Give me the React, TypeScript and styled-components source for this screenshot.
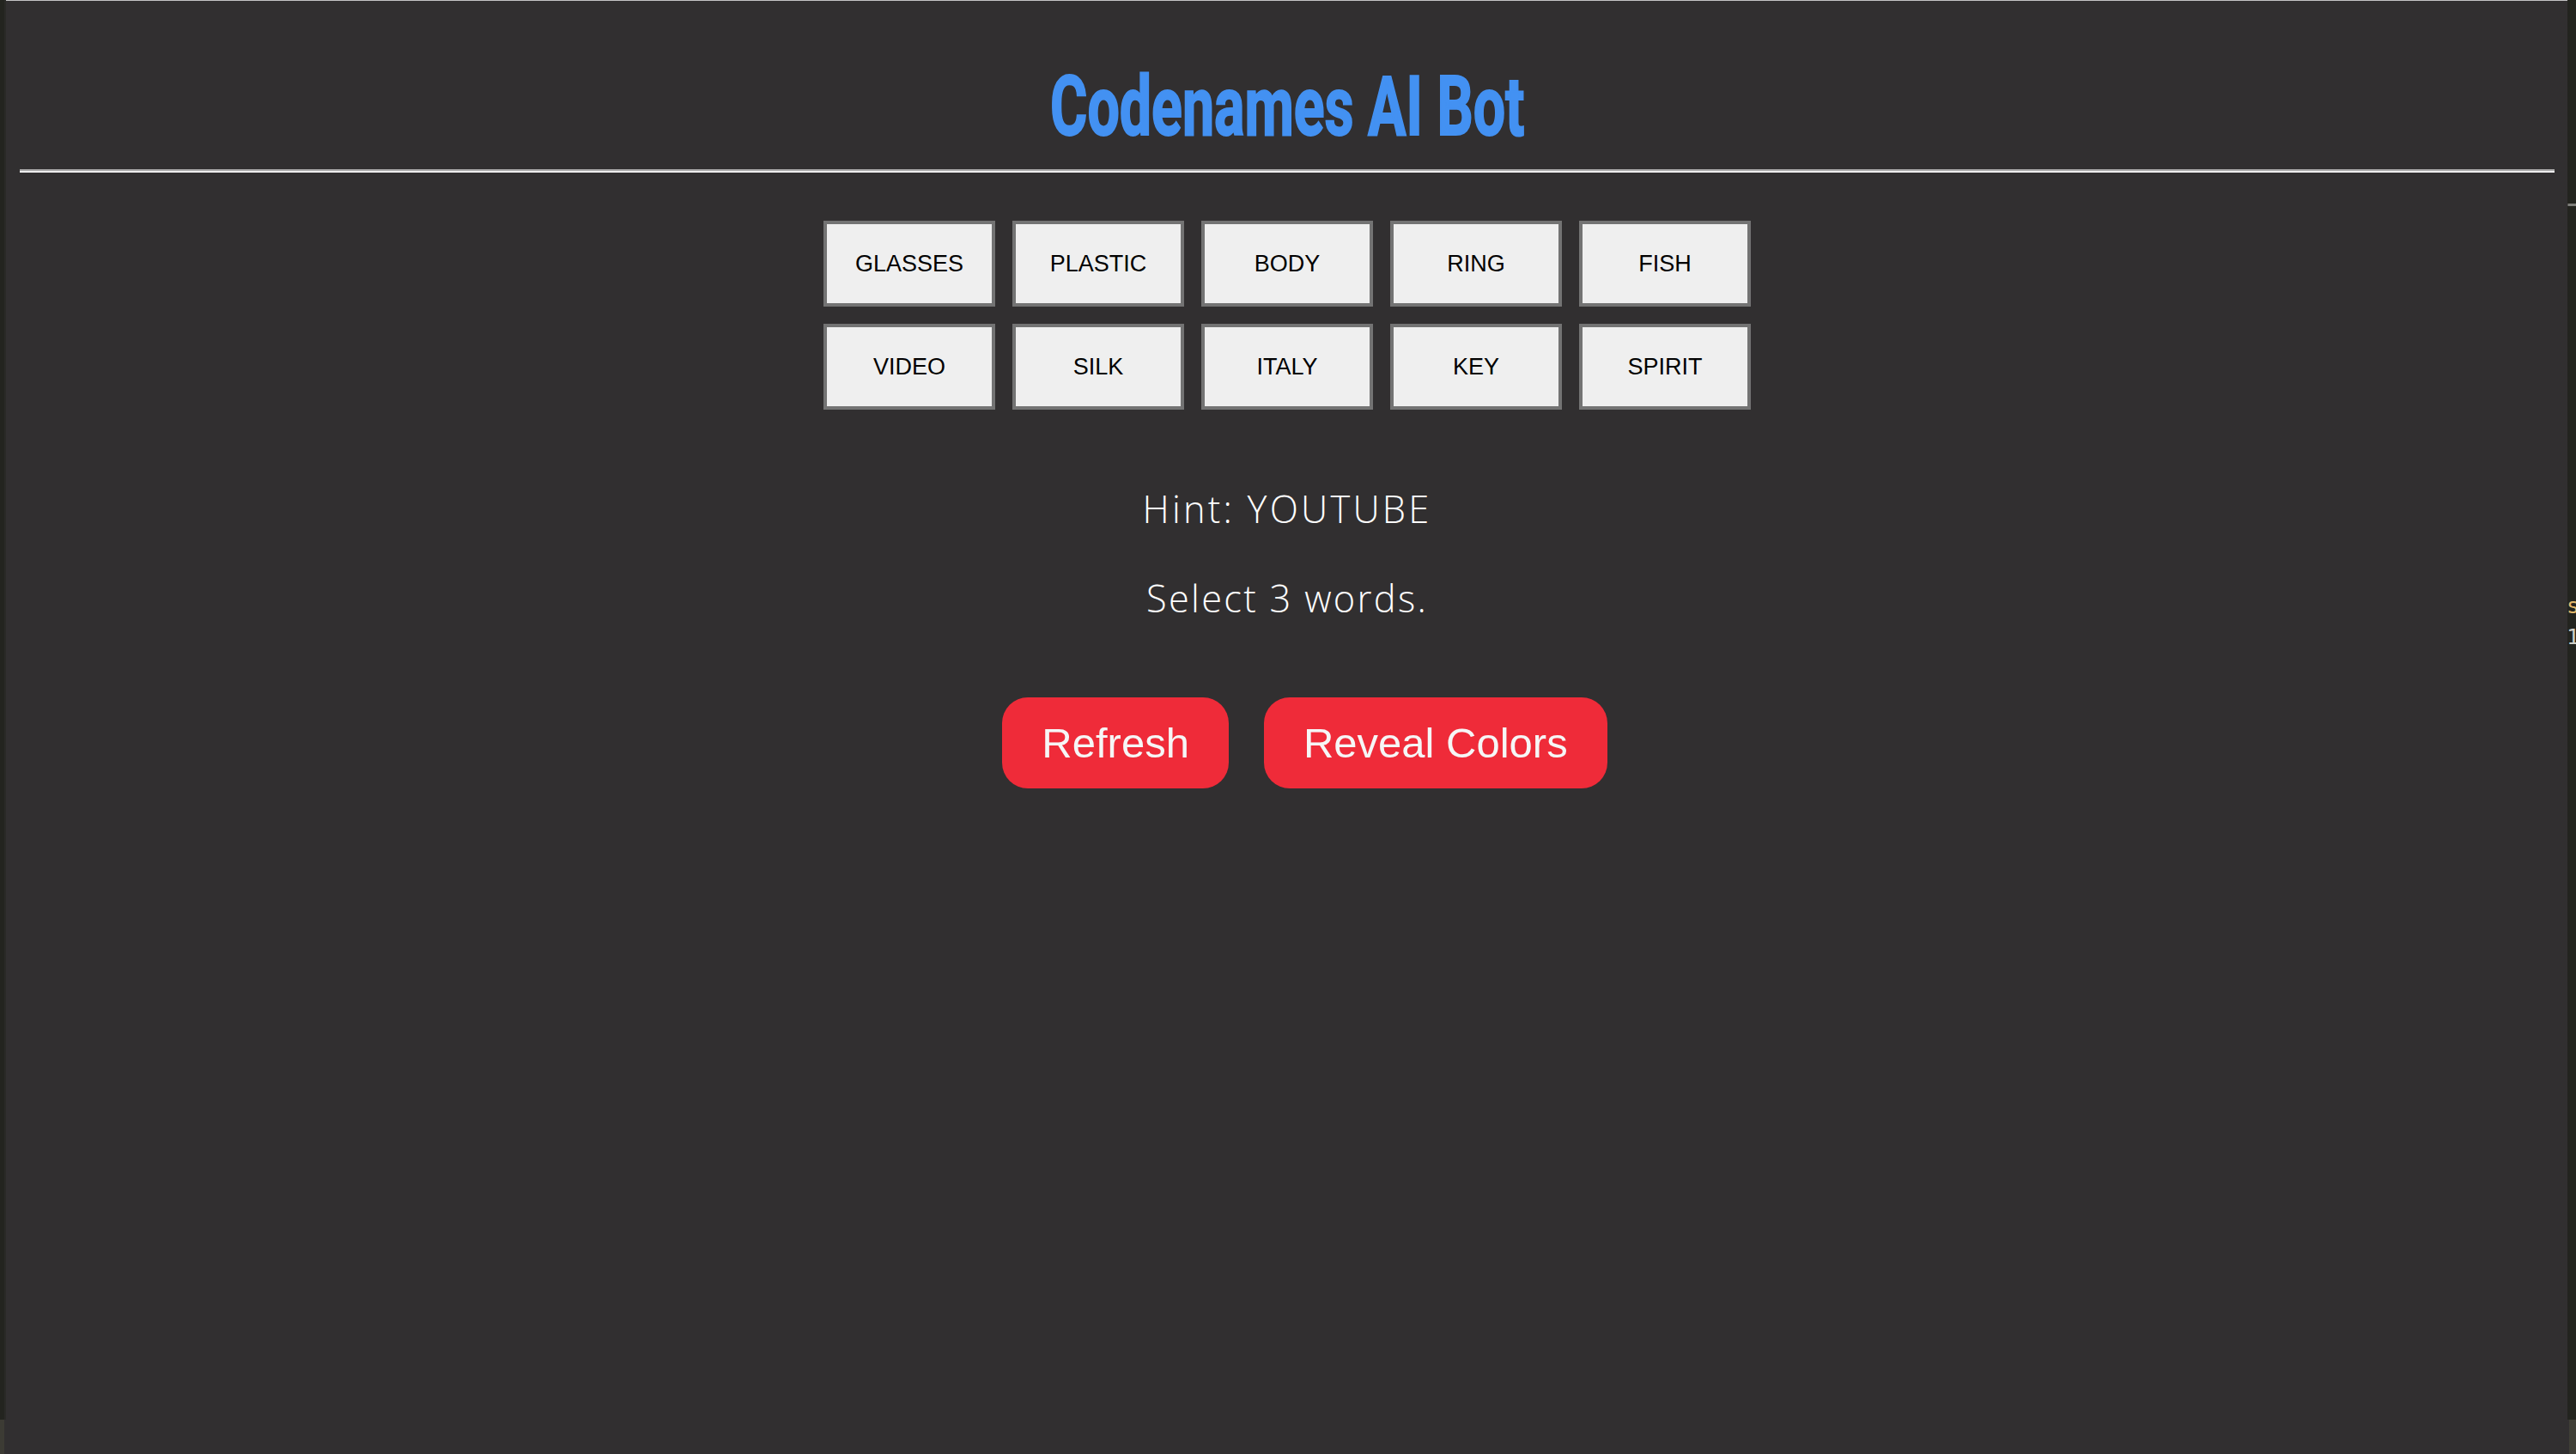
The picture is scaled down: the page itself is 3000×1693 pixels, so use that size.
import React from 'react'
import styled, { createGlobalStyle } from 'styled-components'

const colors = {
  page: '#312f30',
  edge: '#23241f',
  edgeLow: '#3c3b34',
  blue: '#4391f2',
  red: '#ef2b39',
  tileBorder: '#737373',
  tileFill: '#efefef',
}

const GlobalStyle = createGlobalStyle`
  html, body {
    margin: 0;
    padding: 0;
    background: ${colors.page};
    overflow: hidden;
  }
`

const Frame = styled.div`
  display: flex;
  height: 100vh;
  width: 100%;
`

const LeftEdge = styled.div`
  width: 7px;
  display: flex;
  flex-direction: column;
`

const LeftEdgeTop = styled.div`
  flex: 1;
  background: linear-gradient(90deg, ${colors.edge} 0 5px, #2a2a27 5px 7px);
`

const LeftEdgeBottom = styled.div`
  height: 40px;
  background: linear-gradient(90deg, ${colors.edgeLow} 0 5px, ${colors.page} 5px 7px);
`

// sliver of the neighbouring editor window on the right
const RightEdge = styled.div`
  width: 10px;
  display: flex;
  flex-direction: column;
  overflow: hidden;
  background: ${colors.edge};
`

const Tick = styled.div`
  margin-top: 237px;
  height: 3px;
  background: #7d7d7a;
  border-left: 1px solid #55554f;
`

const GlyphBlock = styled.div`
  margin-top: 448px;
  flex: 1;
`

const EditorGlyph = styled.div<{ $tone: string }>`
  margin-left: -1px;
  font-family: 'DejaVu Sans Mono', monospace;
  font-size: 25px;
  line-height: 36px;
  color: ${p => p.$tone};
  white-space: nowrap;
`

const RightEdgeBottom = styled.div`
  height: 40px;
  background: linear-gradient(90deg, ${colors.page} 0 2px, #403f37 2px 10px);
`

const Page = styled.main`
  flex: 1;
  border-top: 1px solid #c4c4c4;
  padding: 0 15px 0 16px;
  display: flex;
  flex-direction: column;
  align-items: stretch;
`

const Title = styled.h1`
  margin: 73px 0 0;
  text-align: center;
  font-family: Roboto, 'Liberation Sans', sans-serif;
  font-weight: 700;
  font-size: 96px;
  line-height: 100px;
  color: ${colors.blue};
  -webkit-text-stroke: 2px ${colors.blue};
`

const TitleText = styled.span`
  display: inline-block;
  transform: scaleX(0.69);
`

const Rule = styled.hr`
  margin: 23px 0 0;
  height: 0;
  border: 0;
  border-top: 2px solid #a9a9a9;
  border-bottom: 2px solid #ededed;
`

const Board = styled.div`
  margin-top: 56px;
  display: grid;
  grid-template-columns: repeat(5, 200px);
  gap: 20px;
  justify-content: center;
`

const Tile = styled.div`
  box-sizing: border-box;
  height: 100px;
  border: 4px solid ${colors.tileBorder};
  background: ${colors.tileFill};
  display: flex;
  align-items: center;
  justify-content: center;
  font-family: 'Liberation Sans', Arial, sans-serif;
  font-size: 27px;
  color: #000;
`

const Message = styled.p<{ $gap: number; $spread: number }>`
  margin: ${p => p.$gap}px 0 0;
  text-align: center;
  font-family: 'Open Sans', 'DejaVu Sans', sans-serif;
  font-weight: 350;
  font-size: 43.4px;
  letter-spacing: ${p => p.$spread}px;
  line-height: 60px;
  color: #ffffff;
`

const Actions = styled.div`
  margin-top: 85px;
  display: flex;
  justify-content: center;
`

const ActionButton = styled.button`
  margin-left: 41px;
  padding: 25px 46px;
  border: 0;
  border-radius: 30px;
  background: ${colors.red};
  color: #f6f6f6;
  font-family: 'Liberation Sans', Arial, sans-serif;
  font-size: 49px;
  line-height: 56px;
  cursor: pointer;
`

const words = [
  'GLASSES', 'PLASTIC', 'BODY', 'RING', 'FISH',
  'VIDEO', 'SILK', 'ITALY', 'KEY', 'SPIRIT',
]

const App: React.FC = () => {
  return (
    <>
      <GlobalStyle />
      <Frame>
        <LeftEdge>
          <LeftEdgeTop />
          <LeftEdgeBottom />
        </LeftEdge>
        <Page>
          <Title>
            <TitleText>Codenames AI Bot</TitleText>
          </Title>
          <Rule />
          <Board>
            {words.map(w => (
              <Tile key={w}>{w}</Tile>
            ))}
          </Board>
          <Message $gap={86} $spread={3.2}>Hint: YOUTUBE</Message>
          <Message $gap={44} $spread={2.3}>Select 3 words.</Message>
          <Actions>
            <ActionButton>Refresh</ActionButton>
            <ActionButton>Reveal Colors</ActionButton>
          </Actions>
        </Page>
        <RightEdge>
          <Tick />
          <GlyphBlock>
            <EditorGlyph $tone="#e2b86b">s</EditorGlyph>
            <EditorGlyph $tone="#cfcfc8">1</EditorGlyph>
          </GlyphBlock>
          <RightEdgeBottom />
        </RightEdge>
      </Frame>
    </>
  )
}

export default App
